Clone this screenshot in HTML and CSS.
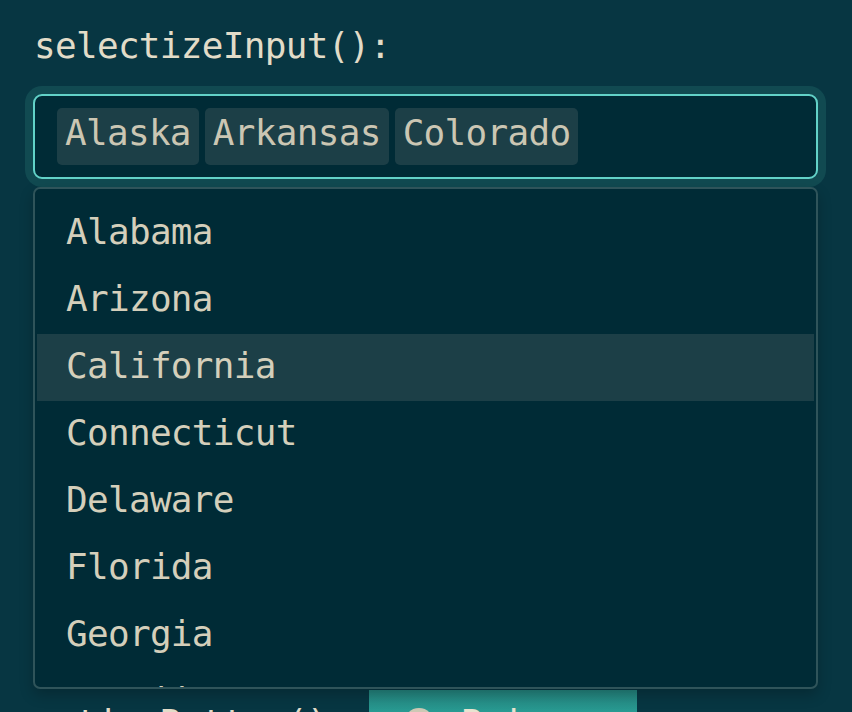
FILE: index.html
```html
<!DOCTYPE html>
<html>
<head>
<meta charset="utf-8">
<link rel="stylesheet" href="styles.css">
</head>
<body>
<div class="page">
  <div class="label">selectizeInput():</div>
  <div class="select-input">
    <span class="tag">Alaska</span>
    <span class="tag">Arkansas</span>
    <span class="tag">Colorado</span>
  </div>
  <div class="dropdown">
    <div class="options">
      <div class="option">Alabama</div>
      <div class="option">Arizona</div>
      <div class="option active">California</div>
      <div class="option">Connecticut</div>
      <div class="option">Delaware</div>
      <div class="option">Florida</div>
      <div class="option">Georgia</div>
      <div class="option">Hawaii</div>
      <div class="option">Idaho</div>
    </div>
  </div>
  <div class="row">
    <div class="label row-label">actionButton():</div>
    <button class="btn">
      <svg class="btn-icon" width="30" height="30" viewBox="0 0 30 30"><circle cx="15" cy="15" r="15" fill="#cdc8b4"/></svg>
      <span>Primary</span>
    </button>
  </div>
</div>
</body>
</html>
```

FILE: styles.css
```css
html, body {
  margin: 0;
  padding: 0;
  background: #073642;
  overflow: hidden;
}

body {
  font-family: "DejaVu Sans Mono", "Liberation Mono", monospace;
  font-size: 36px;
  letter-spacing: -0.7px;
  line-height: 42px;
}

.page {
  display: flex;
  flex-direction: column;
  padding: 25px 0 0 33px;
  width: 785px;
}

.label {
  color: #e2dcc8;
  margin-bottom: 27px;
  padding-left: 1px;
}

.select-input {
  display: flex;
  gap: 6px;
  box-sizing: border-box;
  height: 85px;
  padding: 12px 22px;
  background: #002b36;
  border: 2px solid #62d2c8;
  border-radius: 9px;
  box-shadow: 0 0 0 8px #114a51;
}

.tag {
  display: block;
  padding: 4px 8px 11px;
  background: #1c3f47;
  border-radius: 5px;
  color: #cbc6b3;
}

.dropdown {
  margin-top: 8px;
  height: 502px;
  box-sizing: border-box;
  background: #002b36;
  border: 2px solid #2f545a;
  border-radius: 7px;
  box-shadow: 0 6px 14px rgba(0, 0, 0, 0.22);
  overflow: hidden;
  position: relative;
  z-index: 2;
}

.options {
  padding: 11px 2px 0;
}

.option {
  padding: 11px 0 14px 29px;
  color: #d4cfbb;
}

.option.active {
  background: #1c3f47;
}

.row {
  display: flex;
  align-items: center;
  gap: 20px;
  margin-top: 1px;
}

.row-label {
  margin-bottom: 0;
}

.btn {
  display: flex;
  align-items: center;
  gap: 27px;
  width: 268px;
  padding: 12px 0 12px 35px;
  border: none;
  border-radius: 0;
  background: linear-gradient(to bottom, #23827c 0px, #2aa198 28px);
  color: #e8e3d0;
  font: inherit;
  letter-spacing: inherit;
  line-height: 42px;
}

.btn-icon {
  flex: none;
}
```
